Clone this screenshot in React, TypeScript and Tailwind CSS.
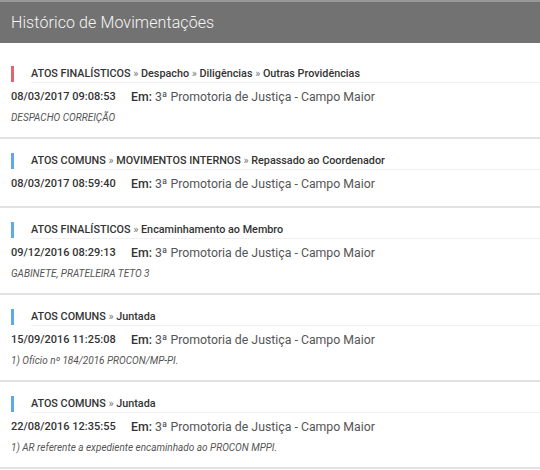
const items = [
  {
    color: 'bg-[#e2646d]',
    path: ['ATOS FINALÍSTICOS', 'Despacho', 'Diligências', 'Outras Providências'],
    date: '08/03/2017 09:08:53',
    note: 'DESPACHO CORREIÇÃO',
  },
  {
    color: 'bg-[#5eaae8]',
    path: ['ATOS COMUNS', 'MOVIMENTOS INTERNOS', 'Repassado ao Coordenador'],
    date: '08/03/2017 08:59:40',
  },
  {
    color: 'bg-[#5eaae8]',
    path: ['ATOS FINALÍSTICOS', 'Encaminhamento ao Membro'],
    date: '09/12/2016 08:29:13',
    note: 'GABINETE, PRATELEIRA TETO 3',
  },
  {
    color: 'bg-[#5eaae8]',
    path: ['ATOS COMUNS', 'Juntada'],
    date: '15/09/2016 11:25:08',
    note: '1) Ofício nº 184/2016 PROCON/MP-PI.',
  },
  {
    color: 'bg-[#5eaae8]',
    path: ['ATOS COMUNS', 'Juntada'],
    date: '22/08/2016 12:35:55',
    note: '1) AR referente a expediente encaminhado ao PROCON MPPI.',
  },
];

export default function App() {
  return (
    <div className="w-[540px] h-[470px] overflow-hidden bg-white font-['Roboto',sans-serif]">
      {/* Header */}
      <div className="h-[43px] bg-[#727272] border-t-2 border-[#999999] flex items-center px-[11px]">
        <h2 className="text-[16px] font-light text-[#f6f6f6] tracking-[0.1px]">Histórico de Movimentações</h2>
      </div>

      {/* Movimentações */}
      <div className="pt-[9px]">
        {items.map((item, i) => (
          <div key={i} className="pt-[13px] pb-[12px] border-b-2 border-[#e2e2e2]">
            <div className="flex items-center pl-[11px]">
              <div className={`w-[3px] h-[16px] ${item.color}`} />
              <div className="ml-[17px] flex-1 h-[18px] leading-[17px] border-b border-[#f0f0f0] text-[10.8px] font-medium text-[#333] whitespace-nowrap">
                {item.path.map((p, j) => (
                  <span key={j}>
                    {j > 0 && <span className="font-normal text-[#777]">{' » '}</span>}
                    {p}
                  </span>
                ))}
              </div>
            </div>
            <div className="mt-[4px] pl-[11px] flex h-[20px] items-center text-[12.3px] text-[#555]">
              <span className="font-medium text-[11px] text-[#333] w-[120px]">{item.date}</span>
              <span>
                <span className="font-medium text-[#333]">Em:</span> 3ª Promotoria de Justiça - Campo Maior
              </span>
            </div>
            {item.note && (
              <div className="mt-[2px] pl-[11px] h-[16px] flex items-center text-[10px] italic text-[#555]">
                {item.note}
              </div>
            )}
          </div>
        ))}
      </div>
    </div>
  );
}
